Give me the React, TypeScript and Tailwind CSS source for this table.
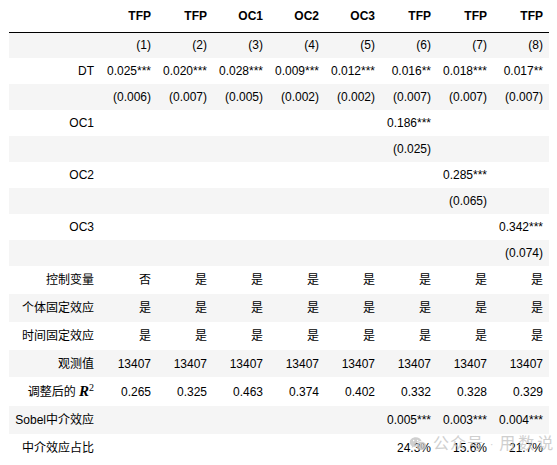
import { RiWechatFill } from "react-icons/ri";

type Row = { label: React.ReactNode; cells: string[]; h: string; gray: boolean };

const blank = ["", "", "", "", "", "", "", ""];
const yes = ["是", "是", "是", "是", "是", "是", "是", "是"];

const rows: Row[] = [
  { label: "", cells: ["(1)", "(2)", "(3)", "(4)", "(5)", "(6)", "(7)", "(8)"], h: "h-[26px]", gray: true },
  { label: "DT", cells: ["0.025***", "0.020***", "0.028***", "0.009***", "0.012***", "0.016**", "0.018***", "0.017**"], h: "h-[26px]", gray: false },
  { label: "", cells: ["(0.006)", "(0.007)", "(0.005)", "(0.002)", "(0.002)", "(0.007)", "(0.007)", "(0.007)"], h: "h-[26px]", gray: true },
  { label: "OC1", cells: ["", "", "", "", "", "0.186***", "", ""], h: "h-[26px]", gray: false },
  { label: "", cells: ["", "", "", "", "", "(0.025)", "", ""], h: "h-[26px]", gray: true },
  { label: "OC2", cells: ["", "", "", "", "", "", "0.285***", ""], h: "h-[26px]", gray: false },
  { label: "", cells: ["", "", "", "", "", "", "(0.065)", ""], h: "h-[26px]", gray: true },
  { label: "OC3", cells: ["", "", "", "", "", "", "", "0.342***"], h: "h-[26px]", gray: false },
  { label: "", cells: ["", "", "", "", "", "", "", "(0.074)"], h: "h-[26px]", gray: true },
  { label: "控制变量", cells: ["否", "是", "是", "是", "是", "是", "是", "是"], h: "h-[28px]", gray: false },
  { label: "个体固定效应", cells: yes, h: "h-[28px]", gray: true },
  { label: "时间固定效应", cells: yes, h: "h-[28px]", gray: false },
  { label: "观测值", cells: ["13407", "13407", "13407", "13407", "13407", "13407", "13407", "13407"], h: "h-[27px]", gray: true },
  {
    label: (
      <span>
        调整后的{" "}
        <span className="font-['Liberation_Serif',serif] text-[15px] font-bold italic">R</span>
        <sup className="font-['Liberation_Serif',serif] text-[10px]">2</sup>
      </span>
    ),
    cells: ["0.265", "0.325", "0.463", "0.374", "0.402", "0.332", "0.328", "0.329"],
    h: "h-[29px]",
    gray: false,
  },
  { label: "Sobel中介效应", cells: ["", "", "", "", "", "0.005***", "0.003***", "0.004***"], h: "h-[28px]", gray: true },
  { label: "中介效应占比", cells: ["", "", "", "", "", "24.3%", "15.6%", "21.7%"], h: "h-[28px]", gray: false },
];

const heads = ["TFP", "TFP", "OC1", "OC2", "OC3", "TFP", "TFP", "TFP"];

export default function App() {
  return (
    <div className="relative h-[465px] w-[557px] overflow-hidden bg-white pl-[9px] font-['Liberation_Sans','Noto_Sans_CJK_SC',sans-serif] text-[12px] text-black">
      <table className="w-[540px] table-fixed border-collapse">
        <colgroup>
          <col className="w-[92px]" />
          {blank.map((_, i) => (
            <col key={i} className="w-[56px]" />
          ))}
        </colgroup>
        <thead>
          <tr className="h-[32px] border-b border-black">
            <th />
            {heads.map((h, i) => (
              <th key={i} className="pr-[6px] text-right font-bold">
                {h}
              </th>
            ))}
          </tr>
        </thead>
        <tbody>
          {rows.map((r, i) => (
            <tr key={i} className={`${r.h} ${r.gray ? "bg-[#f5f5f5]" : "bg-white"}`}>
              <td className="whitespace-nowrap pr-[7px] text-right">{r.label}</td>
              {r.cells.map((c, j) => (
                <td key={j} className="whitespace-nowrap pr-[6px] text-right">
                  {c}
                </td>
              ))}
            </tr>
          ))}
        </tbody>
      </table>
      <div className="pointer-events-none absolute left-[409px] top-[432px] flex items-center gap-[6px] text-[16px] text-[#c4c4c4] opacity-80">
        <RiWechatFill className="size-[18px]" />
        <span className="tracking-[1px]">公众号</span>
        <span className="text-[10px]">·</span>
        <span className="tracking-[3px]">用数说</span>
      </div>
    </div>
  );
}
